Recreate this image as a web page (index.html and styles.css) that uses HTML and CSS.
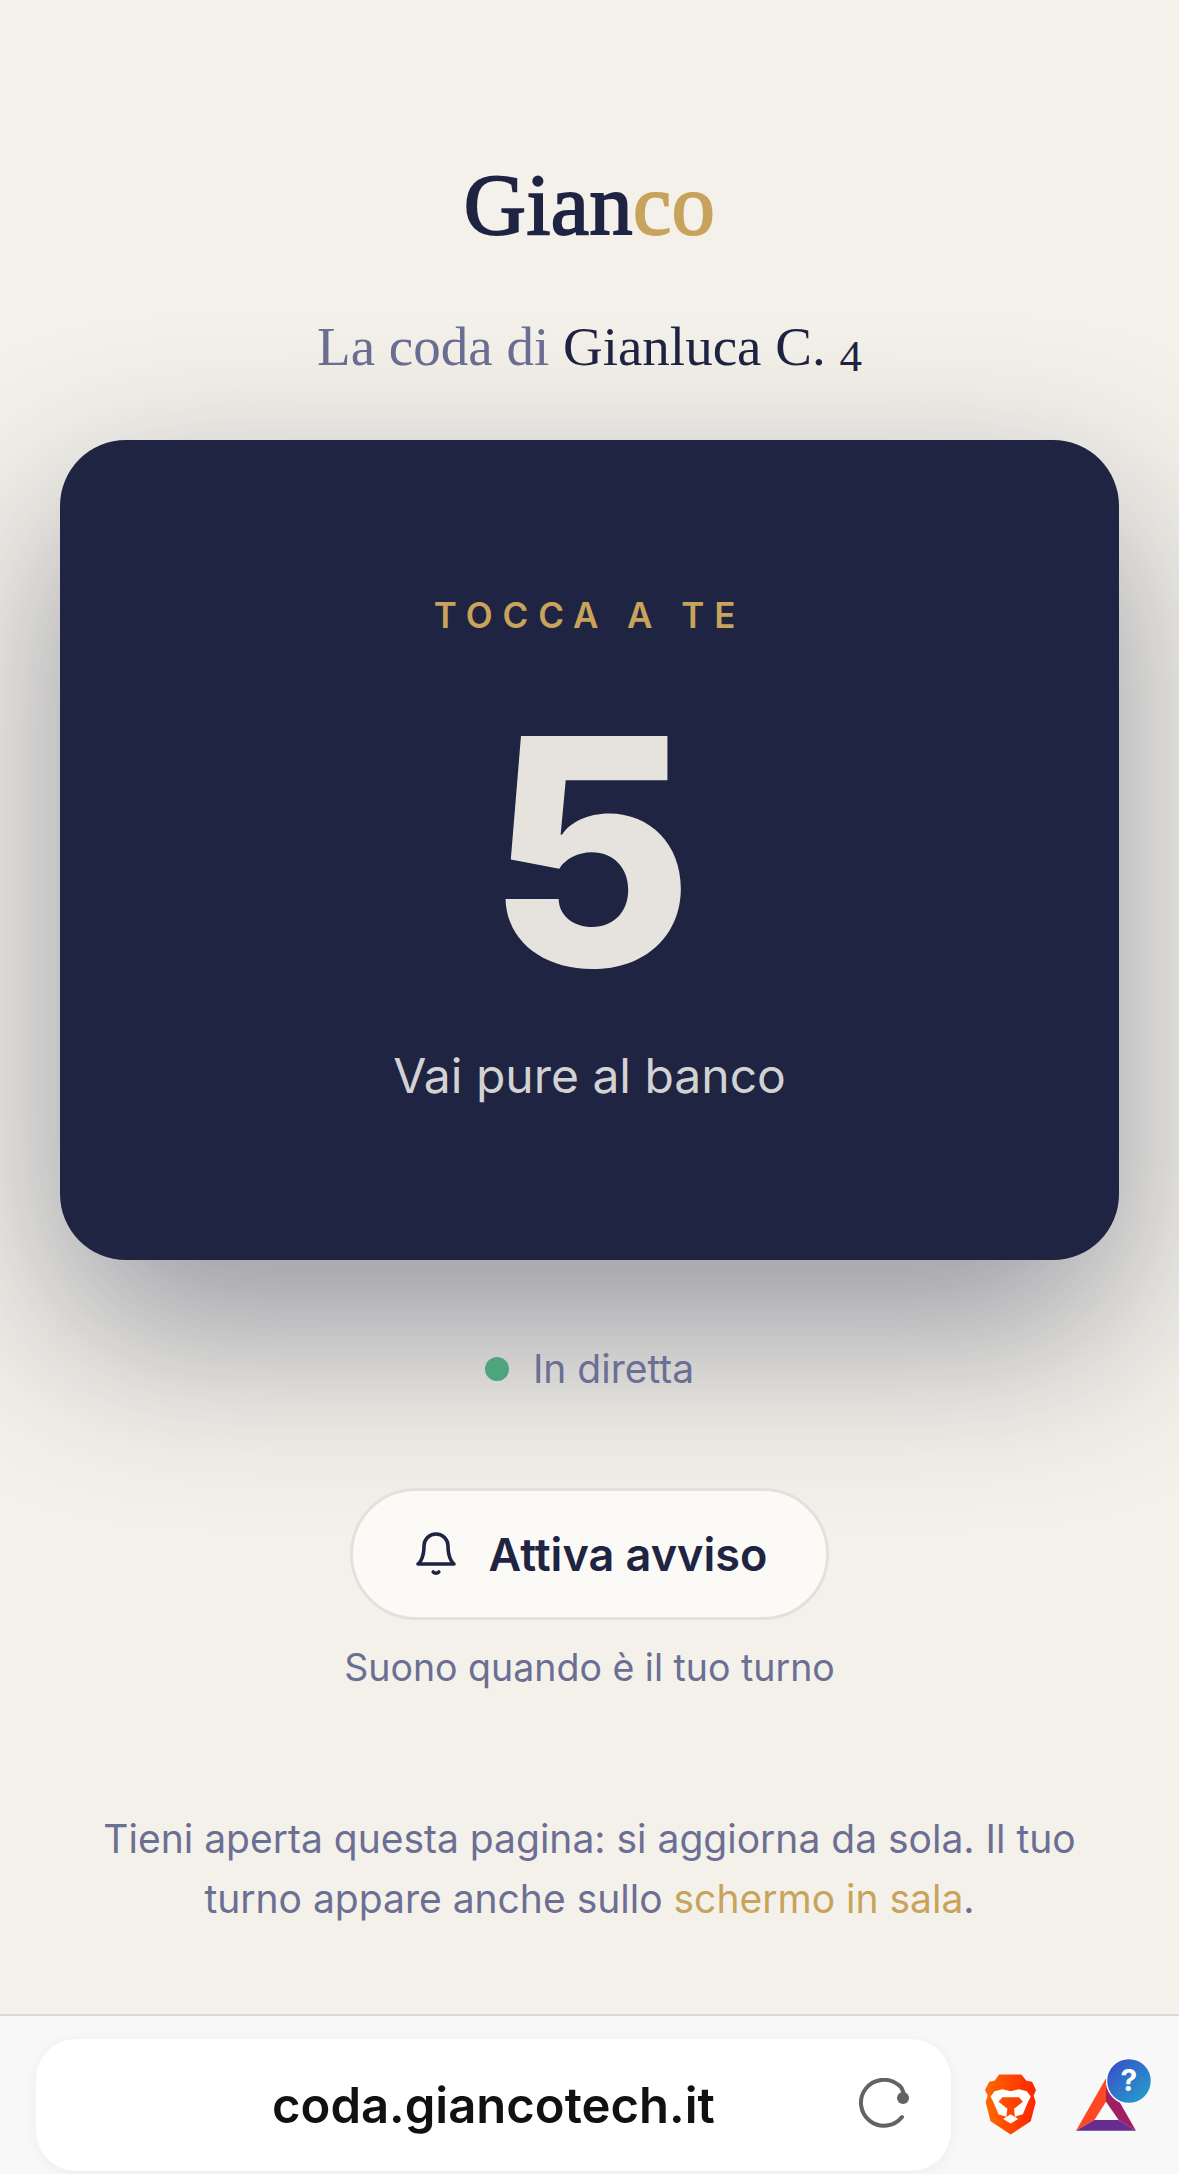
FILE: index.html
```html
<!DOCTYPE html>
<html lang="it">
<head>
<meta charset="utf-8">
<title>Gianco</title>
<link rel="stylesheet" href="styles.css">
</head>
<body>
<div class="page">
  <main class="main">
    <h1 class="logo">Gian<span class="gold">co</span></h1>
    <h2 class="queue">La coda di <span class="queue-name">Gianluca C. <span class="oldstyle">4</span></span></h2>
    <section class="card">
      <div class="eyebrow">TOCCA A TE</div>
      <div class="number">5</div>
      <div class="card-note">Vai pure al banco</div>
    </section>
    <div class="live"><span class="dot"></span><span>In diretta</span></div>
    <button class="alert" type="button">
      <svg class="bell" viewBox="0 0 24 24" fill="none" stroke="#1e2442" stroke-width="1.800" stroke-linecap="round" stroke-linejoin="round"><path d="M18 8A6 6 0 0 0 6 8c0 7-3 9-3 9h18s-3-2-3-9"/><path d="M13.400 21a2 2 0 0 1-2.800 0"/></svg>
      <span>Attiva avviso</span>
    </button>
    <p class="hint">Suono quando è il tuo turno</p>
    <p class="info">Tieni aperta questa pagina: si aggiorna da sola. Il tuo turno appare anche sullo <span class="gold">schermo in sala</span>.</p>
  </main>
  <footer class="bar">
    <div class="url">
      <span class="url-text">coda.giancotech.it</span>
      <svg class="reload" viewBox="0 0 54 50" fill="none"><path d="M44 39A23 23 0 1 1 40 6.500Q44 9 45.500 15" stroke="#636366" stroke-width="4" stroke-linecap="round"/><circle cx="45" cy="20" r="6" fill="#636366"/></svg>
    </div>
    <svg class="brave" viewBox="77 103 155 182">
      <defs><linearGradient id="bg" x1="0" x2="1" y1="0" y2="0"><stop offset="0" stop-color="#ff6a00"/><stop offset="1" stop-color="#ff2400"/></linearGradient></defs>
      <path fill="url(#bg)" d="M120 103H187L203 122L220 125L232 150L225 167L231 187L216 245L155 285L94 245L79 187L85 167L77 150L90 125L106 122Z"/>
      <path fill="#fff" d="M106 154L130 148L155 154L180 148L204 154L216 170L207 188L192 224L168 231L165 207L192 186L180 172H130L118 186L145 207L142 231L118 224L103 188L94 170Z"/>
      <path fill="#fff" d="M132 238L155 224L178 238L155 252Z"/>
    </svg>
    <div class="bat">
      <svg class="bat-mark" viewBox="350 115 180 157">
        <polygon fill="#ff4724" points="440,115 350,272 405,240 440,185"/>
        <polygon fill="#9e1f63" points="440,115 530,272 478,240 440,185"/>
        <polygon fill="#662d91" points="350,272 530,272 478,240 405,240"/>
      </svg>
      <svg class="bat-badge" viewBox="0 0 46 46">
        <defs><linearGradient id="qb" x1="0" x2="1" y1="0" y2="1"><stop offset="0" stop-color="#3a47c9"/><stop offset="1" stop-color="#22a7cc"/></linearGradient></defs>
        <circle cx="23" cy="23" r="22.500" fill="url(#qb)" stroke="#fafafa" stroke-width="1.500"/>
        <text x="23" y="33" text-anchor="middle" class="bat-q">?</text>
      </svg>
    </div>
  </footer>
</div>
</body>
</html>
```

FILE: styles.css
```css
* { box-sizing: border-box; }
html, body { margin: 0; padding: 0; }
body { background: #f4f1ea; font-family: "Inter", "Liberation Sans", sans-serif; overflow: hidden; }
.page { width: 1179px; height: 2174px; display: flex; flex-direction: column; }
.main { flex: 1; display: flex; flex-direction: column; align-items: center; padding: 155px 60px 0; min-height: 0; }
.gold { color: #c8a35c; }
.logo { margin: 0; font-family: "Liberation Serif", serif; font-size: 86px; font-weight: 400; line-height: 100px; color: #1e2442; -webkit-text-stroke: 2px currentColor; letter-spacing: 0.5px; }
.queue { margin: 61px 0 0; font-family: "Liberation Serif", serif; font-size: 55px; font-weight: 400; line-height: 62px; color: #6b6f93; }
.queue-name { color: #1e2442; }
.oldstyle { font-size: 0.82em; vertical-align: -0.14em; line-height: 0; }
.card { width: 1059px; height: 820px; margin-top: 62px; border-radius: 66px; background: #1e2442; box-shadow: 0 72px 180px rgba(30, 36, 66, 0.44); display: flex; flex-direction: column; align-items: center; padding-top: 153px; flex: none; }
.eyebrow { font-size: 35px; line-height: 44px; font-weight: 600; letter-spacing: 9.900px; color: #c8a35c; }
.number { font-size: 316px; line-height: 316px; font-weight: 800; color: #e6e3de; margin: 56px 0 0 2px; }
.card-note { font-size: 48px; line-height: 58px; color: #d3d2d3; margin-top: 38px; }
.live { display: flex; align-items: center; gap: 24px; margin-top: 84px; font-size: 39px; line-height: 50px; color: #6b6f93; }
.dot { width: 24px; height: 24px; border-radius: 50%; background: #4fa37d; }
.alert { display: flex; align-items: center; gap: 29px; height: 132px; margin-top: 94px; padding: 0 59px; background: #fbfaf6; border: 3px solid #e3e1dc; border-radius: 66px; font-family: inherit; font-size: 45px; font-weight: 600; color: #1e2442; }
.bell { width: 48px; height: 48px; flex: none; }
.hint { margin: 23px 0 0; font-size: 37.500px; line-height: 50px; color: #6b6f93; }
.info { margin: 116px 0 0; font-size: 39px; line-height: 60px; color: #6b6f93; text-align: center; width: 1000px; }
.bar { height: 160px; flex: none; border-top: 2px solid #d9d9d7; background: #f8f8f8; display: flex; align-items: flex-start; padding: 23px 0 0 36px; }
.url { width: 915px; height: 132px; background: #fff; border-radius: 40px; box-shadow: 0 2px 14px rgba(0, 0, 0, 0.05); display: flex; align-items: center; position: relative; padding-left: 236px; }
.url-text { font-size: 49px; font-weight: 600; color: #111; }
.reload { position: absolute; left: 822px; top: 39px; width: 54px; height: 50px; }
.brave { width: 51px; height: 61px; margin: 35px 0 0 34px; flex: none; }
.bat { position: relative; width: 60px; height: 53px; margin: 39px 0 0 40px; flex: none; }
.bat-mark { width: 60px; height: 53px; display: block; }
.bat-badge { position: absolute; left: 30px; top: -20px; width: 46px; height: 46px; }
.bat-q { font-family: "Inter", sans-serif; font-size: 30px; font-weight: 700; fill: #fff; }
```
